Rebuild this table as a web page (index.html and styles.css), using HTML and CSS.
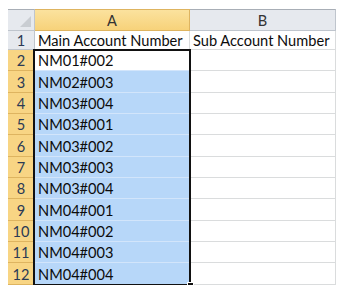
FILE: index.html
```html
<!DOCTYPE html>
<html lang="en">

<head>
  <meta charset="UTF-8">
  <title>Account Numbers</title>
  <link rel="stylesheet" href="styles.css">
</head>

<body>
  <main class="sheet">
    <div class="corner"><span class="corner-tri"></span></div>
    <div class="col-head active">A</div>
    <div class="col-head">B</div>

    <div class="row-head">1</div>
    <div class="cell">Main Account Number</div>
    <div class="cell">Sub Account Number</div>

    <div class="row-head active">2</div>
    <div class="cell sel current">NM01#002</div>
    <div class="cell"></div>

    <div class="row-head active">3</div>
    <div class="cell sel">NM02#003</div>
    <div class="cell"></div>

    <div class="row-head active">4</div>
    <div class="cell sel">NM03#004</div>
    <div class="cell"></div>

    <div class="row-head active">5</div>
    <div class="cell sel">NM03#001</div>
    <div class="cell"></div>

    <div class="row-head active">6</div>
    <div class="cell sel">NM03#002</div>
    <div class="cell"></div>

    <div class="row-head active">7</div>
    <div class="cell sel">NM03#003</div>
    <div class="cell"></div>

    <div class="row-head active">8</div>
    <div class="cell sel">NM03#004</div>
    <div class="cell"></div>

    <div class="row-head active">9</div>
    <div class="cell sel">NM04#001</div>
    <div class="cell"></div>

    <div class="row-head active">10</div>
    <div class="cell sel">NM04#002</div>
    <div class="cell"></div>

    <div class="row-head active">11</div>
    <div class="cell sel">NM04#003</div>
    <div class="cell"></div>

    <div class="row-head active">12</div>
    <div class="cell sel">NM04#004</div>
    <div class="cell"></div>

    <!-- selection outline A2:A12 -->
    <div class="selection"><span class="fill-handle"></span></div>
  </main>
</body>

</html>
```

FILE: styles.css
```css
/* ---- General ---- */

:root {
  --headGray: #e6e9ee;
  --headLine: #bfc5cd;
  --headGold: #f8d584;
  --goldLine: #deb460;
  --gridLine: #dadcdd;
  --selBlue: #b7d7f9;
}

body {
  margin: 0;
  background: #fff;
  font-family: "Lato", "Liberation Sans", sans-serif;
  font-size: 14.6px;
  color: #0c0c0c;
}

/* ---- Sheet ---- */

.sheet {
  display: grid;
  grid-template-columns: 27px 155px 146px;
  grid-template-rows: 22px 19px repeat(11, 21.35px);
  margin: 9px 0 0 8px;
  width: fit-content;
  position: relative;
}

.corner,
.col-head,
.row-head {
  background: var(--headGray);
  color: #333;
  display: flex;
  align-items: center;
  justify-content: center;
  border-right: 1px solid var(--headLine);
  border-bottom: 1px solid var(--headLine);
}

.corner,
.col-head {
  border-top: 1px solid #a8aeb6;
}

.corner {
  position: relative;
}

.corner-tri {
  position: absolute;
  right: 3px;
  bottom: 3px;
  width: 0;
  height: 0;
  border-left: 11px solid transparent;
  border-bottom: 11px solid #c9cdd2;
}

.row-head {
  color: #2b3a55;
  padding-top: 1px;
}

.col-head.active,
.row-head.active {
  background: var(--headGold);
  border-color: var(--goldLine);
}

.col-head.active {
  background: linear-gradient(#fbe29e, #f7d27a);
}

.cell {
  display: flex;
  align-items: center;
  padding: 1px 0 0 3px;
  white-space: nowrap;
  overflow: hidden;
  border-right: 1px solid var(--gridLine);
  border-bottom: 1px solid var(--gridLine);
}

.cell.sel {
  background: var(--selBlue);
  border-bottom-color: #d2e5fb;
}

.cell.current {
  background: #fff;
}

/* ---- Selection ---- */

.selection {
  position: absolute;
  grid-column: 2 / 3;
  grid-row: 3 / 14;
  inset: -1px -1px -1px -2px;
  border: 2px solid #111;
  pointer-events: none;
}

.fill-handle {
  position: absolute;
  right: -5px;
  bottom: -5px;
  width: 5px;
  height: 5px;
  background: #111;
  border: 1px solid #fff;
}
```
